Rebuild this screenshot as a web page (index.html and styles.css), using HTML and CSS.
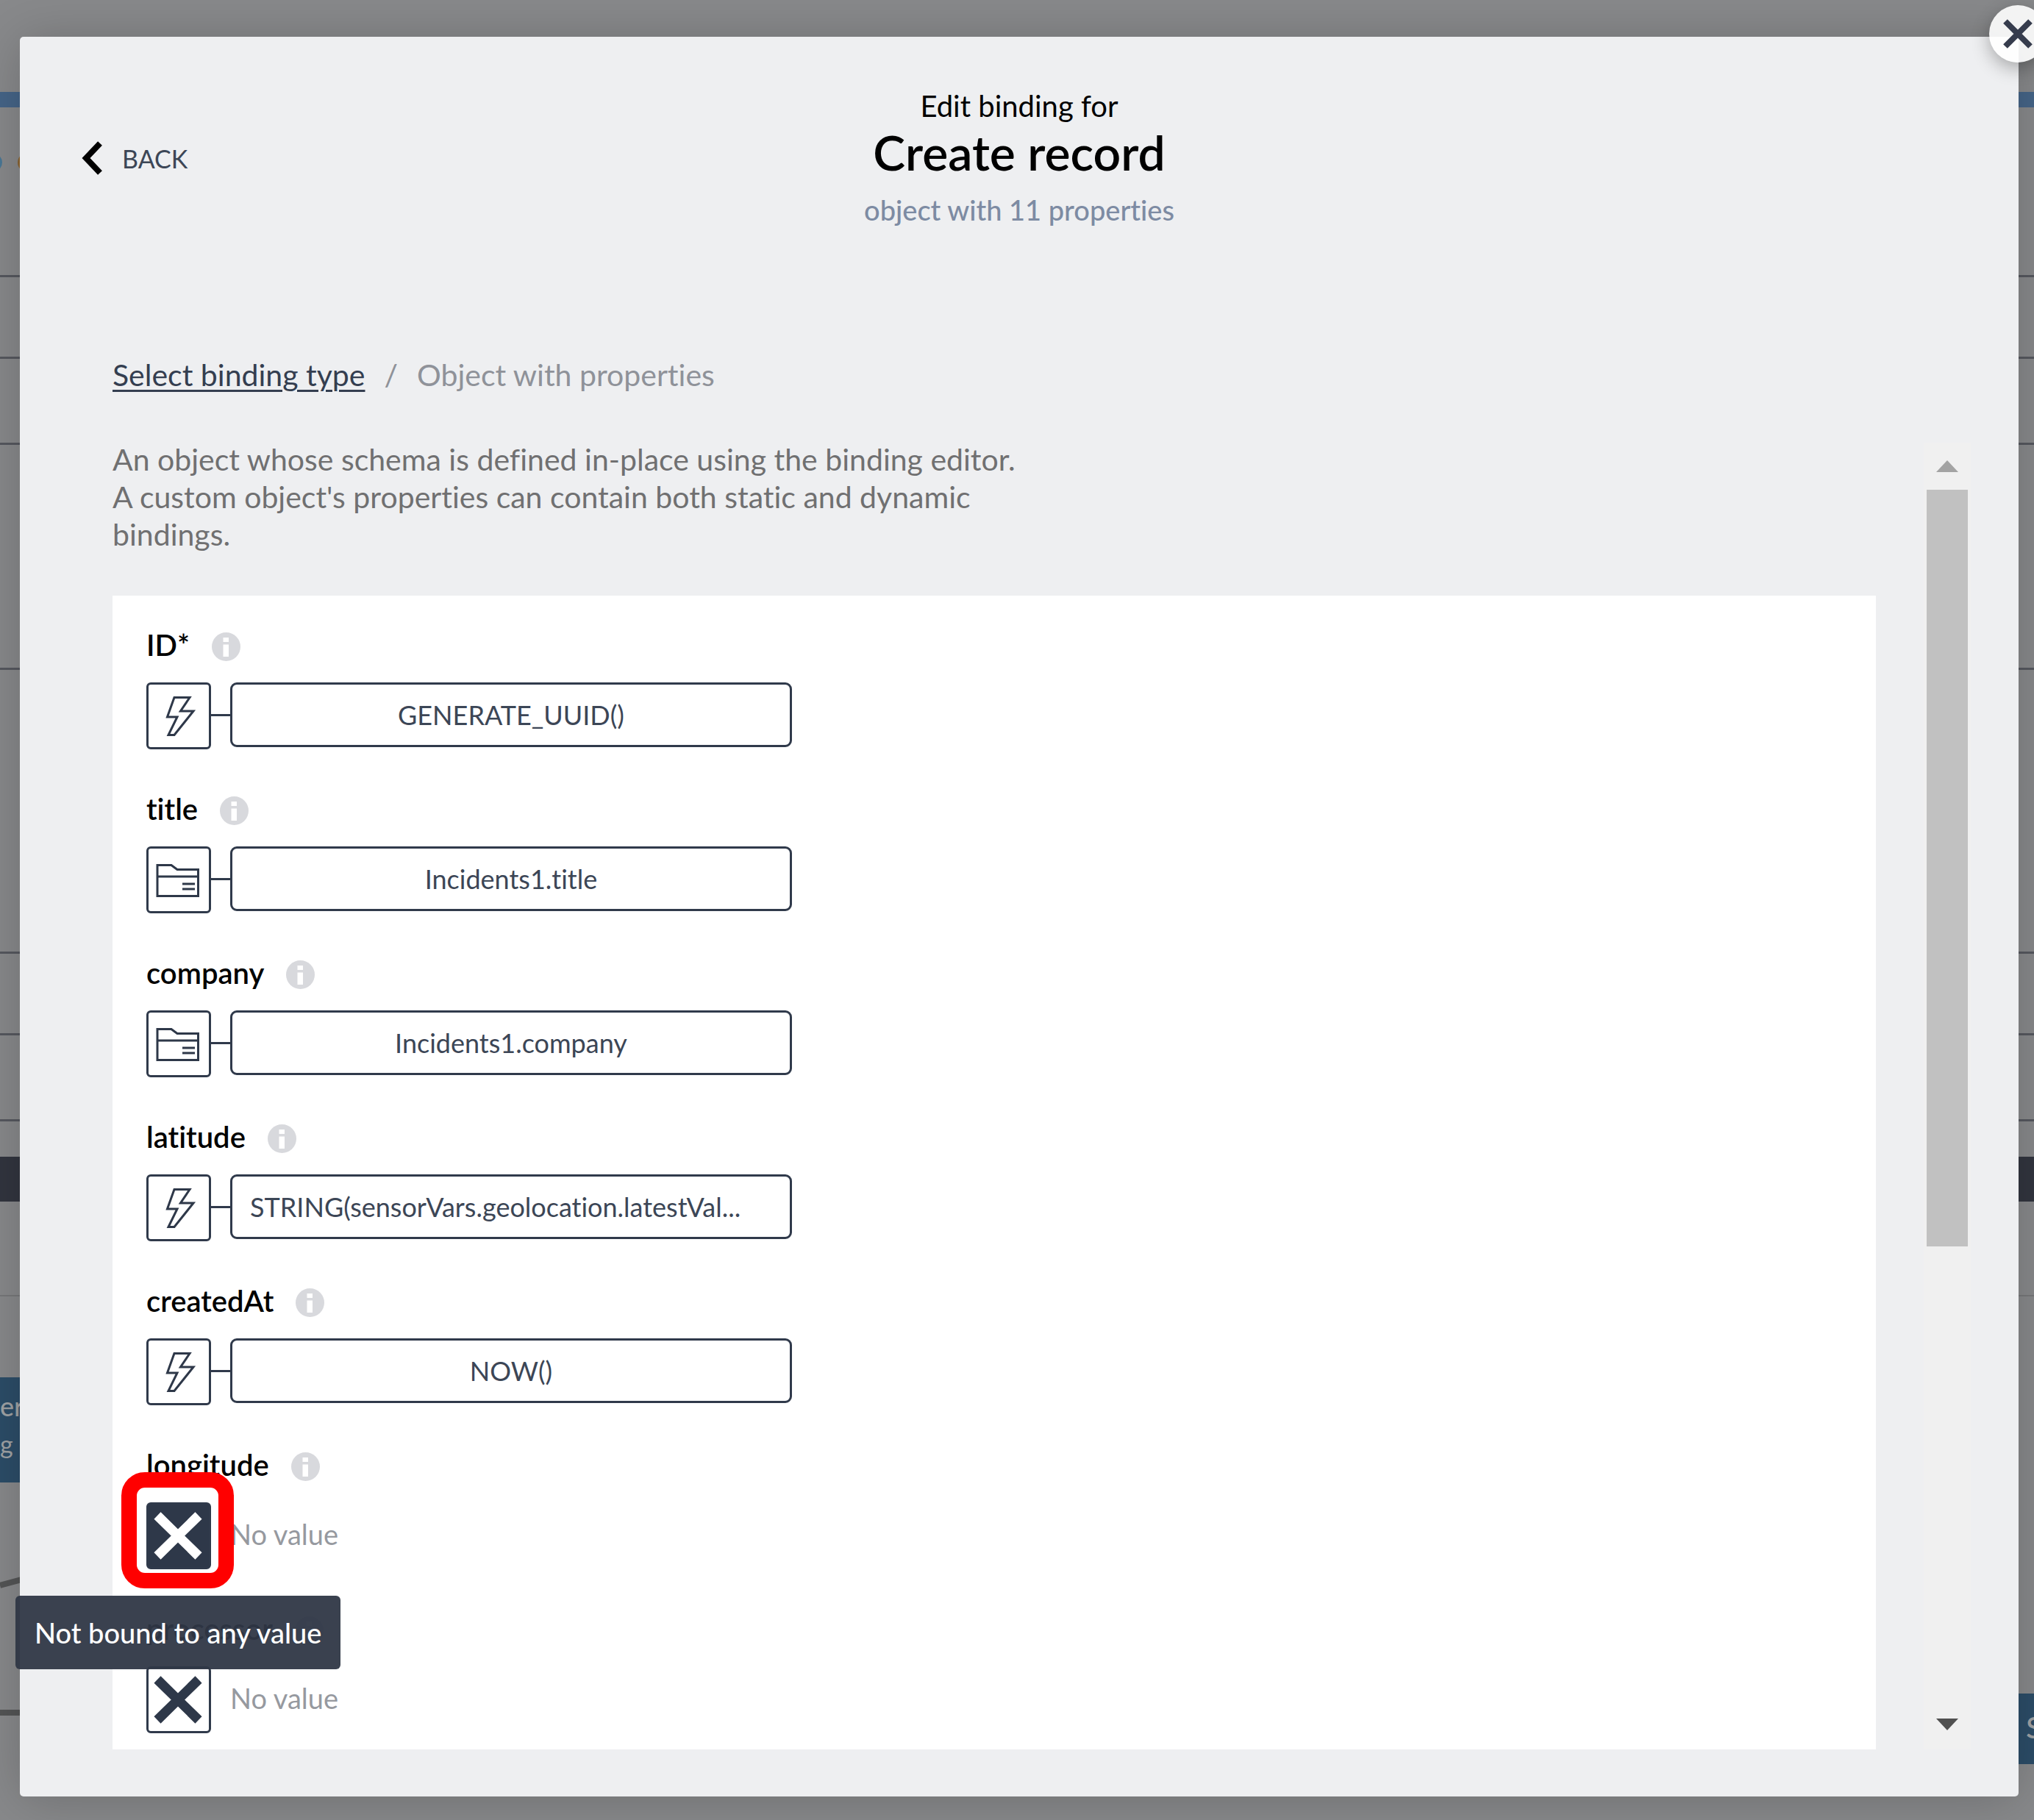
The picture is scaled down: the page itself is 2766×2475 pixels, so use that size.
FILE: index.html
```html
<!DOCTYPE html>
<html lang="en">
<head>
<meta charset="utf-8">
<title>Edit binding for Create record</title>
<link rel="stylesheet" href="styles.css">
</head>
<body>
<svg class="sprite" aria-hidden="true">
  <symbol id="bolt" viewBox="0 0 88 91"><path d="M38 20.500H59L46.500 39H64L38 71.500H30L42 47H28.500Z" fill="none" stroke="currentColor" stroke-width="3"/></symbol>
  <symbol id="folder" viewBox="0 0 88 91"><path d="M15 25.500H34L42 31.500H70.500V67.500H15ZM15 41H70M49 51H66M49 58H66" fill="none" stroke="currentColor" stroke-width="3"/></symbol>
  <symbol id="cross" viewBox="0 0 88 91"><path d="M15 18L71 73M71 18L15 73" fill="none" stroke="currentColor" stroke-width="13"/></symbol>
  <symbol id="info" viewBox="0 0 39 39"><circle cx="19.500" cy="19.500" r="19.500" fill="#d8d9dd"/><path d="M15.500 7H23V13H15.500ZM15.500 16.500H23V33H15.500Z" fill="#fff"/></symbol>
</svg>

<div class="backdrop" aria-hidden="true">
  <div class="band band-top"></div>
  <div class="band band-blue"></div>
  <div class="band band-tabs"></div>
  <div class="band band-head"></div>
  <div class="band band-row"></div>
  <div class="band band-tall"></div>
  <div class="band band-taller"></div>
  <div class="band band-head"></div>
  <div class="band band-row"></div>
  <div class="band band-gap"></div>
  <div class="band band-dark"></div>
  <div class="band band-light"></div>
  <span class="dot dot-blue"></span>
  <span class="dot dot-orange"></span>
  <div class="node node-left"><b>er</b><span>g</span></div>
  <div class="node node-right"><b>S</b></div>
  <svg class="wires" viewBox="0 0 40 200"><path d="M0 20L40 9M0 193H40" fill="none" stroke="#545556" stroke-width="8"/></svg>
</div>

<main class="modal" role="dialog" aria-labelledby="dialog-title">
  <button class="close" type="button" aria-label="Close">
    <svg viewBox="0 0 78 78"><path d="M22 22L56 56M56 22L22 56" fill="none" stroke="currentColor" stroke-width="8"/></svg>
  </button>

  <header class="header">
    <button class="back" type="button">
      <svg viewBox="0 0 30 48"><path d="M26 4L7 24L26 44" fill="none" stroke="#000" stroke-width="8"/></svg>
      BACK
    </button>
    <div class="heading">
      <p class="eyebrow">Edit binding for</p>
      <h1 class="title" id="dialog-title">Create record</h1>
      <p class="subtitle">object with 11 properties</p>
    </div>
  </header>

  <nav class="crumbs" aria-label="Breadcrumb">
    <a href="#types">Select binding type</a>
    <span>/</span>
    <span>Object with properties</span>
  </nav>

  <div class="content">
    <section class="editor">
      <p class="intro">An object whose schema is defined in-place using the binding editor.<br>A custom object's properties can contain both static and dynamic<br>bindings.</p>

      <div class="panel">
        <div class="property">
          <div class="name"><label for="p-id">ID*</label><svg><use href="#info"/></svg></div>
          <div class="binding">
            <button class="kind" type="button" aria-label="Formula"><svg><use href="#bolt"/></svg></button>
            <button class="value" type="button" id="p-id">GENERATE_UUID()</button>
          </div>
        </div>
        <div class="property">
          <div class="name"><label for="p-title">title</label><svg><use href="#info"/></svg></div>
          <div class="binding">
            <button class="kind" type="button" aria-label="Data item"><svg><use href="#folder"/></svg></button>
            <button class="value" type="button" id="p-title">Incidents1.title</button>
          </div>
        </div>
        <div class="property">
          <div class="name"><label for="p-company">company</label><svg><use href="#info"/></svg></div>
          <div class="binding">
            <button class="kind" type="button" aria-label="Data item"><svg><use href="#folder"/></svg></button>
            <button class="value" type="button" id="p-company">Incidents1.company</button>
          </div>
        </div>
        <div class="property">
          <div class="name"><label for="p-latitude">latitude</label><svg><use href="#info"/></svg></div>
          <div class="binding">
            <button class="kind" type="button" aria-label="Formula"><svg><use href="#bolt"/></svg></button>
            <button class="value value-long" type="button" id="p-latitude">STRING(sensorVars.geolocation.latestVal...</button>
          </div>
        </div>
        <div class="property">
          <div class="name"><label for="p-created">createdAt</label><svg><use href="#info"/></svg></div>
          <div class="binding">
            <button class="kind" type="button" aria-label="Formula"><svg><use href="#bolt"/></svg></button>
            <button class="value" type="button" id="p-created">NOW()</button>
          </div>
        </div>
        <div class="property">
          <div class="name"><label for="p-longitude">longitude</label><svg><use href="#info"/></svg></div>
          <div class="binding binding-empty">
            <button class="kind kind-active" type="button" id="p-longitude" aria-describedby="tip"><svg><use href="#cross"/></svg></button>
            <span class="none">No value</span>
            <span class="marker"></span>
            <span class="tooltip" role="tooltip" id="tip">Not bound to any value</span>
          </div>
        </div>
        <div class="property">
          <div class="name"><label for="p-processor">processor</label><svg><use href="#info"/></svg></div>
          <div class="binding binding-empty">
            <button class="kind" type="button" id="p-processor"><svg><use href="#cross"/></svg></button>
            <span class="none">No value</span>
          </div>
        </div>
      </div>
    </section>

    <div class="scrollbar" aria-hidden="true">
      <svg class="arrow" viewBox="0 0 30 16"><path d="M0 16L15 0L30 16Z" fill="#a3a3a3"/></svg>
      <div class="track"><div class="thumb"></div></div>
      <svg class="arrow" viewBox="0 0 30 16"><path d="M0 0H30L15 16Z" fill="#505050"/></svg>
    </div>
  </div>
</main>
</body>
</html>
```
FILE: styles.css
```css
* { box-sizing: border-box; }

body {
  position: relative;
  display: flex;
  min-height: 100vh;
  margin: 0;
  padding: 50px 21px 32px 27px;
  overflow: hidden;
  background: #88898b;
  color: #000;
  font-family: Lato, "Liberation Sans", sans-serif;
  font-variant-ligatures: none;
}

p, h1 { margin: 0; }
button { margin: 0; border: 0; background: none; font: inherit; font-variant-ligatures: none; color: inherit; }
.sprite { position: absolute; width: 0; height: 0; }

/* Dimmed app behind the dialog */
.backdrop { position: absolute; inset: 0; overflow: hidden; }
.band { border-bottom: 3px solid #56585f; }
.band-top { height: 125px; border: 0; }
.band-blue { height: 21px; border: 0; background: #466588; }
.band-tabs { height: 231px; }
.band-head { height: 111px; }
.band-row { height: 117px; }
.band-tall { height: 306px; }
.band-taller { height: 386px; }
.band-gap { height: 48px; border: 0; }
.band-dark { height: 61px; border: 0; background: #32353f; }
.band-light { height: 129px; border-bottom: 2px solid #77787a; }
.dot { position: absolute; top: 208px; width: 26px; height: 26px; border-radius: 50%; }
.dot-blue { left: -23px; background: #4a7896; }
.dot-orange { left: 24px; background: #8a6432; }
.node { position: absolute; display: flex; flex-direction: column; background: #2c4d68; color: #a0a3a5; }
.node-left { left: 0; top: 1873px; width: 60px; height: 143px; padding-top: 15px; }
.node-left b { font-size: 36px; font-weight: 500; line-height: 48px; }
.node-left span { font-size: 34px; line-height: 56px; }
.node-right { right: 0; top: 2303px; width: 60px; height: 96px; padding: 22px 0 0 49px; }
.node-right b { font-size: 41px; font-weight: 500; line-height: 48px; }
.wires { position: absolute; left: 0; top: 2136px; width: 40px; height: 200px; }

/* Dialog */
.modal {
  position: relative;
  display: flex;
  flex: 1;
  flex-direction: column;
  min-width: 0;
  padding: 70px 65px 64px;
  border-radius: 5px;
  background: #eeeff1;
  box-shadow: 0 4px 70px rgba(0, 0, 0, .2);
}
.close {
  position: absolute;
  top: -43px;
  right: -38px;
  width: 78px;
  height: 78px;
  padding: 0;
  border-radius: 50%;
  background: rgba(255, 255, 255, .9);
  box-shadow: 0 8px 24px rgba(0, 0, 0, .3);
  color: #363c4d;
}
.close svg { display: block; width: 78px; height: 78px; }

.header { display: grid; grid-template-columns: 1fr auto 1fr; align-items: center; }
.back {
  display: flex;
  align-items: center;
  justify-self: start;
  gap: 26px;
  padding: 0 0 3px 18px;
  color: #3c4656;
  font-size: 34px;
}
.back svg { width: 30px; height: 48px; }
.heading { text-align: center; }
.eyebrow { font-size: 40px; line-height: 48px; }
.title { font-size: 66px; font-weight: 600; line-height: 78px; }
.subtitle { margin-top: 11px; color: #7d8ba3; font-size: 38px; font-weight: 500; line-height: 56px; }

.crumbs {
  display: flex;
  gap: 26px;
  margin-top: 171px;
  padding-left: 61px;
  color: #8f9299;
  font-size: 41px;
  line-height: 51px;
}
.crumbs a { color: #343e50; text-decoration-thickness: 3px; text-underline-offset: 5px; }

.content { display: flex; flex: 1; gap: 65px; margin-top: 64px; padding-left: 61px; }
.editor { display: flex; flex: 1; flex-direction: column; min-width: 0; }
.intro { color: #707071; font-size: 41px; line-height: 51px; }
.panel {
  display: flex;
  flex: 1;
  flex-direction: column;
  gap: 59px;
  margin-top: 58px;
  padding: 45px 46px 22px;
  background: #fff;
}
.name { display: flex; align-items: center; gap: 30px; height: 48px; font-size: 40px; font-weight: 600; }
.name label { padding-bottom: 4px; }
.name svg { width: 39px; height: 39px; }
.binding { position: relative; display: flex; margin-top: 25px; }
.kind {
  width: 88px;
  height: 91px;
  padding: 0;
  border: 3px solid #303a4b;
  border-radius: 6px;
  color: #2e3849;
}
.kind svg { display: block; width: 88px; height: 91px; margin: -3px; }
.kind-active { background: #2e3849; color: #fff; }
.value {
  position: relative;
  width: 764px;
  height: 88px;
  margin-left: 26px;
  padding: 0 24px;
  border: 3px solid #303a4b;
  border-radius: 9px;
  color: #3c4656;
  font-size: 36px;
  white-space: nowrap;
}
.value::before {
  content: "";
  position: absolute;
  top: 40px;
  left: -29px;
  width: 26px;
  height: 3px;
  background: #303a4b;
}
.value-long { text-align: left; }
.binding-empty { align-items: center; gap: 26px; }
.none { padding-bottom: 6px; color: #96999f; font-size: 38px; }
.marker {
  position: absolute;
  top: -41px;
  left: -34px;
  width: 153px;
  height: 158px;
  border: 21px solid #f00;
  border-radius: 32px;
}
.tooltip {
  position: absolute;
  z-index: 2;
  top: 127px;
  left: -178px;
  padding: 0 26px;
  border-radius: 6px;
  background: rgba(47, 55, 70, .95);
  color: #fff;
  font-size: 38px;
  font-weight: 500;
  line-height: 100px;
  white-space: nowrap;
}

.scrollbar {
  display: flex;
  flex-direction: column;
  align-items: center;
  width: 64px;
  margin-top: 3px;
  padding: 24px 0 26px;
  background: #f0f0f0;
}
.arrow { width: 30px; height: 16px; }
.track { flex: 1; width: 56px; margin: 24px 0; }
.thumb { height: 62.5%; background: #c1c1c1; }
```
